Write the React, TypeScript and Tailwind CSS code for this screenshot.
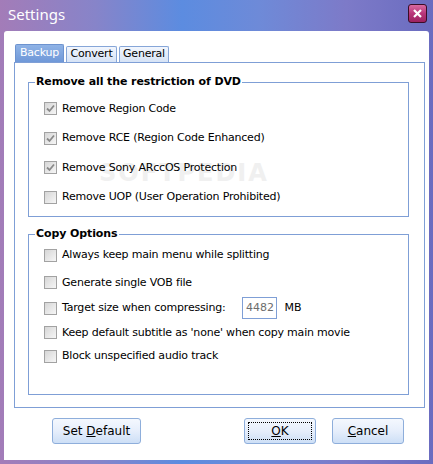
import React from "react";

const ui = { fontFamily: '"DejaVu Sans", Tahoma, sans-serif' };

function CheckBox({ checked }: { checked?: boolean }) {
    return (
        <div className="w-[13px] h-[13px] shrink-0 border border-[#a2a2a2] bg-[linear-gradient(135deg,#d6d6d6,#f6f6f6)] flex items-center justify-center">
            {checked && (
                <svg width="9" height="9" viewBox="0 0 9 9">
                    <path d="M1 4.5 L3.5 7 L8 1.5" fill="none" stroke="#8a8a8a" strokeWidth="1.8" />
                </svg>
            )}
        </div>
    );
}

function Option({ label, checked, className }: { label: string; checked?: boolean; className?: string }) {
    return (
        <div className={"flex items-center h-4 gap-[5px] pl-[15px] " + (className ?? "")}>
            <CheckBox checked={checked} />
            <span className="text-[11px] tracking-[-0.2px] text-black leading-4">{label}</span>
        </div>
    );
}

function Btn({ children, w, focus }: { children: React.ReactNode; w: string; focus?: boolean }) {
    return (
        <button className={"h-[26px] rounded-[3px] border border-[#8eaedb] bg-[linear-gradient(180deg,#f4f8fe_0%,#e6eefb_50%,#cddff6_100%)] text-[12px] text-black p-[3px] " + w}>
            <div className={"h-full w-full flex items-center justify-center " + (focus ? "border border-dotted border-black" : "")}>
                {children}
            </div>
        </button>
    );
}

export default function App() {
    return (
        <div
            className="relative w-[433px] h-[464px] flex flex-col bg-[linear-gradient(90deg,#a37cb8_0%,#8784c9_22%,#5c8ce0_42%,#6e8ad8_60%,#7d7ac8_80%,#6a6cc0_100%)]"
            style={ui}
        >
            {/* title bar */}
            <div className="h-[31px] flex items-center justify-between pl-2 pr-[6px]">
                <span className="text-white text-[15px] leading-none -mt-[2px]" style={{ fontFamily: '"Noto Sans", "Open Sans", sans-serif' }}>
                    Settings
                </span>
                <div className="w-[19px] h-[19px] -mt-[4px] rounded-[3px] border border-[#3a0c26] bg-[linear-gradient(180deg,#d86aa0_0%,#b8367a_50%,#9c2260_100%)] flex items-center justify-center">
                    <svg width="9" height="9" viewBox="0 0 9 9">
                        <path d="M1 1 L8 8 M8 1 L1 8" stroke="white" strokeWidth="2.2" />
                    </svg>
                </div>
            </div>

            {/* client */}
            <div className="mx-[4px] h-[429px] bg-white rounded-t-[3px] flex flex-col">
                {/* tabs */}
                <div className="flex items-end h-[31px] pl-[11px] gap-[2px]">
                    <div className="h-[18px] w-[49px] rounded-t-[2px] border border-b-0 border-[#6d93cf] bg-[linear-gradient(180deg,#8fb3e6,#6f98d8)] text-white text-[11px] tracking-[-0.2px] flex items-center justify-center">
                        Backup
                    </div>
                    <div className="h-[16px] w-[51px] rounded-t-[2px] border border-b-0 border-[#86a6d8] bg-[linear-gradient(180deg,#f2f6fd,#d6e3f6)] text-black text-[11px] tracking-[-0.2px] flex items-center justify-center">
                        Convert
                    </div>
                    <div className="h-[16px] w-[50px] rounded-t-[2px] border border-b-0 border-[#86a6d8] bg-[linear-gradient(180deg,#f2f6fd,#d6e3f6)] text-black text-[11px] tracking-[-0.2px] flex items-center justify-center">
                        General
                    </div>
                </div>

                {/* tab panel */}
                <div className="relative ml-[10px] w-[411px] h-[346px] border border-[#7f9fd6] flex flex-col">
                    <div className="absolute left-[84px] top-[98px] text-[24px] font-bold tracking-[2px] leading-none text-[#f0f0f0] pointer-events-none select-none">
                        SOFTPEDIA
                    </div>

                    {/* group 1 */}
                    <div className="relative mt-[19px] ml-[13px] w-[381px] h-[135px] border border-[#7f9fd6] flex flex-col">
                        <div className="-mt-[9px] ml-[6px] w-fit px-[1px] bg-white text-[11px] font-bold tracking-[-0.1px] leading-4 text-black">
                            Remove all the restriction of DVD
                        </div>
                        <div className="relative flex flex-col gap-[13.5px] mt-[10.5px]">
                            <Option label="Remove Region Code" checked />
                            <Option label="Remove RCE (Region Code Enhanced)" checked />
                            <Option label="Remove Sony ARccOS Protection" checked />
                            <Option label="Remove UOP (User Operation Prohibited)" />
                        </div>
                    </div>

                    {/* group 2 */}
                    <div className="relative mt-[17px] ml-[13px] w-[381px] h-[161px] border border-[#7f9fd6] flex flex-col">
                        <div className="-mt-[9px] ml-[6px] w-fit px-[1px] bg-white text-[11px] font-bold tracking-[-0.1px] leading-4 text-black">
                            Copy Options
                        </div>
                        <Option className="mt-[5px]" label="Always keep main menu while splitting" />
                        <Option className="mt-[11.5px]" label="Generate single VOB file" />
                        <div className="flex items-center mt-[6.5px]">
                            <Option label="Target size when compressing:" />
                            <div className="ml-[17px] w-[35px] h-[22px] border border-[#7f9fd6] flex items-center justify-center text-[11px] text-[#6d6d6d]">
                                4482
                            </div>
                            <span className="ml-[7px] text-[11px] text-black">MB</span>
                        </div>
                        <Option className="mt-[5.5px]" label="Keep default subtitle as 'none' when copy main movie" />
                        <Option className="mt-[7.5px]" label="Block unspecified audio track" />
                    </div>
                </div>

                {/* buttons */}
                <div className="flex mt-[10px] pl-[48px]">
                    <Btn w="w-[89px]">
                        <span>Set <u>D</u>efault</span>
                    </Btn>
                    <div className="ml-[103px]">
                        <Btn w="w-[72px]" focus>
                            <span><u>O</u>K</span>
                        </Btn>
                    </div>
                    <div className="ml-[16px]">
                        <Btn w="w-[72px]">
                            <span><u>C</u>ancel</span>
                        </Btn>
                    </div>
                </div>
            </div>
        </div>
    );
}
